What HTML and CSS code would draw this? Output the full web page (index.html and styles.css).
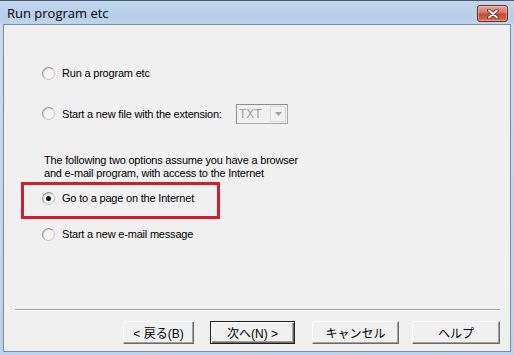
FILE: index.html
```html
<!DOCTYPE html>
<html>
<head>
<meta charset="utf-8">
<link rel="stylesheet" href="styles.css">
</head>
<body>
<div class="window">
  <div class="titlebar">
    <span class="title">Run program etc</span>
    <button class="close" aria-label="Close">
      <svg width="14" height="10" viewBox="0 0 14 10">
        <path d="M3 1.5 L11 8.5 M11 1.5 L3 8.5" stroke="#5a1a10" stroke-width="3.6" stroke-linecap="round"/>
        <path d="M3 1.5 L11 8.5 M11 1.5 L3 8.5" stroke="#ffffff" stroke-width="2" stroke-linecap="round"/>
      </svg>
    </button>
  </div>
  <div class="client">
    <div class="options">
      <label class="row r1"><span class="radio"></span><span>Run a program etc</span></label>
      <div class="row r2">
        <span class="radio"></span><span class="ext-label">Start a new file with the extension:</span>
        <div class="combo"><span class="combo-text">TXT</span><span class="combo-btn"><svg width="7" height="4" viewBox="0 0 7 4"><path d="M0 0 H7 L3.5 4 Z" fill="#a0a0a0"/></svg></span></div>
      </div>
      <p class="note">The following two options assume you have a browser<br>and e-mail program, with access to the Internet</p>
      <label class="row r3"><span class="radio checked"></span><span>Go to a page on the Internet</span></label>
      <label class="row r4"><span class="radio"></span><span>Start a new e-mail message</span></label>
    </div>
    <div class="footer">
      <div class="sep"></div>
      <div class="buttons">
        <button class="btn b1">&lt; 戻る(B)</button>
        <button class="btn b2 default">次へ(N) &gt;</button>
        <button class="btn b3">キャンセル</button>
        <button class="btn b4">ヘルプ</button>
      </div>
    </div>
    <div class="highlight"></div>
  </div>
</div>
</body>
</html>
```
FILE: styles.css
```css
* { box-sizing: border-box; }
html, body { margin: 0; padding: 0; }
body {
  width: 514px;
  height: 355px;
  overflow: hidden;
  font-family: "Liberation Sans", Arial, "Noto Sans CJK JP", sans-serif;
  font-size: 11px;
  color: #000;
  background: #c3d6ea;
}
.window {
  width: 514px;
  height: 355px;
  display: flex;
  flex-direction: column;
  background: linear-gradient(#c9dbef, #bcd2ea);
  border-top: 1px solid #4a5a6e;
}
.titlebar {
  height: 23px;
  display: flex;
  align-items: center;
  padding-left: 7px;
  padding-right: 6px;
  background: linear-gradient(#c2d6ed, #b7cfe9 60%, #bcd3ec);
}
.title {
  font-family: "Open Sans", "Liberation Sans", sans-serif;
  font-size: 13px;
  color: #000;
  flex: 1;
  padding-top: 1px;
}
.close {
  width: 31px;
  height: 17px;
  margin-top: 2px;
  padding: 0;
  border: 1px solid #6e2a20;
  border-radius: 3px;
  background: linear-gradient(#e9a797, #d37560 45%, #c24a33 55%, #d56e55);
  box-shadow: inset 0 0 0 1px rgba(255,255,255,0.35);
  display: flex;
  align-items: center;
  justify-content: center;
}
.client {
  position: relative;
  flex: 1;
  margin: 0 3px 3px 3px;
  background: #f0f0f0;
  border: 1px solid #7a8a9c;
  display: flex;
  flex-direction: column;
}
.options {
  padding-left: 38px;
  display: flex;
  flex-direction: column;
  letter-spacing: -0.2px;
}
.row {
  display: flex;
  align-items: center;
  gap: 7px;
  height: 14px;
}
.radio {
  width: 13px;
  height: 13px;
  border-radius: 50%;
  border: 1px solid #c4c4c4;
  border-left-color: #909090;
  border-top-color: #909090;
  background: #f6f6f6;
  box-shadow: inset 1px 1px 0 #dcdcdc;
  position: relative;
  flex: none;
}
.radio.checked::after {
  content: "";
  position: absolute;
  left: 3px;
  top: 3px;
  width: 5px;
  height: 5px;
  border-radius: 50%;
  background: #111;
}
.r1 { margin-top: 41px; }
.r2 { margin-top: 23px; height: 21px; }
.ext-label { width: 167px; flex: none; white-space: nowrap; }
.combo {
  width: 52px;
  height: 20px;
  border: 1px solid #a9a9a9;
  border-top-color: #8c8c8c;
  border-left-color: #8c8c8c;
  background: #f0f0f0;
  display: flex;
  align-items: stretch;
  padding: 1px;
  letter-spacing: 0;
}
.combo-text {
  flex: 1;
  color: #9a9a9a;
  font-size: 12px;
  line-height: 16px;
  padding-left: 1px;
}
.combo-btn {
  width: 16px;
  border: 1px solid #d8d8d8;
  background: #f2f2f2;
  display: flex;
  align-items: center;
  justify-content: center;
}
.note {
  margin: 30px 0 0 2px;
  line-height: 13px;
}
.r3 { margin-top: 11px; }
.r4 { margin-top: 22px; }
.footer {
  margin-top: auto;
  padding: 0 10px 7px 11px;
}
.sep {
  height: 2px;
  border-top: 1px solid #a0a0a0;
  border-bottom: 1px solid #ffffff;
  margin-bottom: 10px;
}
.buttons {
  display: flex;
  padding-left: 108px;
}
.btn {
  height: 23px;
  padding: 0;
  font-family: "Liberation Sans", Arial, "Noto Sans CJK JP", sans-serif;
  font-size: 12px;
  color: #000;
  background: #f0f0f0;
  border: 1px solid;
  border-color: #ffffff #696969 #696969 #ffffff;
  box-shadow: inset -1px -1px 0 #a0a0a0;
}
.b1 { width: 71px; }
.b2 { width: 85px; margin-left: 16px; }
.b3 { width: 87px; margin-left: 17px; }
.b4 { width: 88px; margin-left: 13px; }
.btn.default {
  border: 1px solid #202020;
  box-shadow: inset 1px 1px 0 #ffffff, inset -1px -1px 0 #696969, inset -2px -2px 0 #a0a0a0;
}
.highlight {
  position: absolute;
  left: 17px;
  top: 157px;
  width: 199px;
  height: 37px;
  border: 3px solid #d01f2c;
}
```
